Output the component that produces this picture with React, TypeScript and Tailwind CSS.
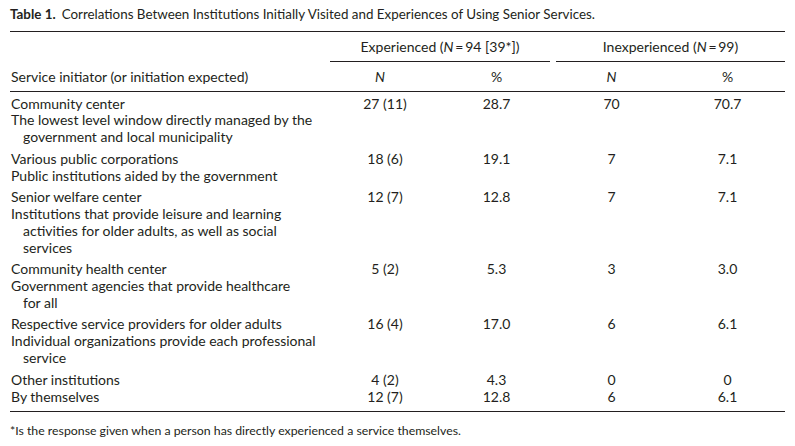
type Row = {
  label: string;
  desc: string[];
  n1: string;
  p1: string;
  n2: string;
  p2: string;
  tight?: boolean;
};

const rows: Row[] = [
  {
    label: "Community center",
    desc: ["The lowest level window directly managed by the", "government and local municipality"],
    n1: "27 (11)",
    p1: "28.7",
    n2: "70",
    p2: "70.7",
  },
  {
    label: "Various public corporations",
    desc: ["Public institutions aided by the government"],
    n1: "18 (6)",
    p1: "19.1",
    n2: "7",
    p2: "7.1",
  },
  {
    label: "Senior welfare center",
    desc: ["Institutions that provide leisure and learning", "activities for older adults, as well as social", "services"],
    n1: "12 (7)",
    p1: "12.8",
    n2: "7",
    p2: "7.1",
  },
  {
    label: "Community health center",
    desc: ["Government agencies that provide healthcare", "for all"],
    n1: "5 (2)",
    p1: "5.3",
    n2: "3",
    p2: "3.0",
  },
  {
    label: "Respective service providers for older adults",
    desc: ["Individual organizations provide each professional", "service"],
    n1: "16 (4)",
    p1: "17.0",
    n2: "6",
    p2: "6.1",
  },
  { label: "Other institutions", desc: [], n1: "4 (2)", p1: "4.3", n2: "0", p2: "0" },
  { label: "By themselves", desc: [], n1: "12 (7)", p1: "12.8", n2: "6", p2: "6.1", tight: true },
];

const cols = "grid grid-cols-[320px_110px_113px_117px_115px]";

export default function App() {
  return (
    <div
      className="min-h-screen w-[795px] bg-white px-[10px] pt-[6px] text-[14px] text-[#231f20]"
      style={{ fontFamily: "Lato, 'Noto Sans', sans-serif" }}
    >
      <p className="text-[13.4px] leading-[16px]">
        <span className="font-bold">Table 1.</span>
        <span className="ml-[6px]">
          Correlations Between Institutions Initially Visited and Experiences of Using Senior Services.
        </span>
      </p>

      <div className="mt-[9px] w-[775px] border-t border-[#231f20]">
        {/* group headers */}
        <div className={cols}>
          <div />
          <div className="col-span-2 mr-[3px] border-b border-[#231f20] pt-[7px] pb-[6px] text-center leading-[16px]">
            Experienced (<i>N</i>&thinsp;=&thinsp;94 [39*])
          </div>
          <div className="col-span-2 ml-[3px] border-b border-[#231f20] pt-[7px] pb-[6px] text-center leading-[16px]">
            Inexperienced (<i>N</i>&thinsp;=&thinsp;99)
          </div>
        </div>

        {/* column headers */}
        <div className={`${cols} border-b border-[#231f20] pt-[7px] pb-[6px] leading-[16px]`}>
          <div className="pl-[1px]">Service initiator (or initiation expected)</div>
          <div className="pr-[10px] text-center italic">N</div>
          <div className="text-center">%</div>
          <div className="text-center italic">N</div>
          <div className="text-center">%</div>
        </div>

        {/* body */}
        <div className="border-b border-[#231f20] pt-[3.5px] pb-[5.5px] leading-[16.9px]">
          {rows.map((r, i) => (
            <div key={r.label} className={`${cols} ${i === 0 || r.tight ? "" : "mt-[4.5px]"}`}>
              <div className="pl-[1px]">
                <div>{r.label}</div>
                {r.desc.map((d, j) => (
                  <div key={d} className={j > 0 ? "pl-[12px]" : ""}>
                    {d}
                  </div>
                ))}
              </div>
              <div className="text-center">{r.n1}</div>
              <div className="text-center">{r.p1}</div>
              <div className="text-center">{r.n2}</div>
              <div className="text-center">{r.p2}</div>
            </div>
          ))}
        </div>
      </div>

      <p className="mt-[12px] text-[12.3px] leading-[14px]">
        *Is the response given when a person has directly experienced a service themselves.
      </p>
    </div>
  );
}
